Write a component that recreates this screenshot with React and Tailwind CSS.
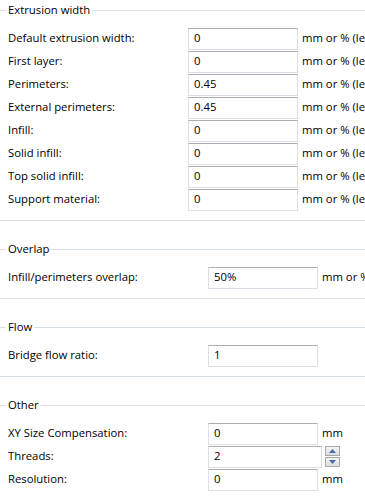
const font = { fontFamily: '"Open Sans", "Noto Sans", sans-serif' };

function Group({ title, children, last }) {
  return (
    <div
      className={`${last ? "" : "border-b border-[#d5dfe5] pb-[9px] mb-[18px]"}`}
    >
      <div className="flex items-center h-[20px]">
        <div className="w-[6px] h-px bg-[#d5dfe5] shrink-0" />
        <span className="px-[2px] leading-none">{title}</span>
        <div className="flex-1 h-px bg-[#d5dfe5]" />
      </div>
      <div className="mt-[7px] flex flex-col">{children}</div>
    </div>
  );
}

function Field({ label, value, unit, labelW, spin }) {
  return (
    <div className="flex items-center h-[23px] pl-[8px] whitespace-nowrap">
      <div className={`${labelW} shrink-0`}>{label}</div>
      <div
        className={`${spin ? "w-[114px]" : "w-[110px]"} shrink-0 h-[22px] border border-[#dbdfe6] border-t-[#abadb3] flex items-center pl-[5px] bg-white`}
      >
        {value}
      </div>
      {spin ? (
        <div className="ml-[3px] flex flex-col gap-[1px] shrink-0">
          <div className="w-[15px] h-[10px] border border-[#a8a8a8] bg-gradient-to-b from-[#f4f4f4] to-[#dcdcdc] flex items-center justify-center">
            <svg width="7" height="4" viewBox="0 0 7 4">
              <path d="M0 4 L3.5 0 L7 4 Z" fill="#4a6ab0" />
            </svg>
          </div>
          <div className="w-[15px] h-[10px] border border-[#a8a8a8] bg-gradient-to-b from-[#f4f4f4] to-[#dcdcdc] flex items-center justify-center">
            <svg width="7" height="4" viewBox="0 0 7 4">
              <path d="M0 0 L3.5 4 L7 0 Z" fill="#4a6ab0" />
            </svg>
          </div>
        </div>
      ) : (
        unit && <span className="ml-[4px] shrink-0">{unit}</span>
      )}
    </div>
  );
}

const extrusion = [
  ["Default extrusion width:", "0"],
  ["First layer:", "0"],
  ["Perimeters:", "0.45"],
  ["External perimeters:", "0.45"],
  ["Infill:", "0"],
  ["Solid infill:", "0"],
  ["Top solid infill:", "0"],
  ["Support material:", "0"],
];

const pct = "mm or % (leave 0 for default)";

export default function App() {
  return (
    <div
      className="w-[365px] h-[498px] bg-white text-black text-[11.3px] overflow-hidden"
      style={font}
    >
      <Group title="Extrusion width">
        {extrusion.map(([l, v]) => (
          <Field key={l} label={l} value={v} unit={pct} labelW="w-[180px]" />
        ))}
      </Group>
      <Group title="Overlap">
        <Field
          label="Infill/perimeters overlap:"
          value="50%"
          unit={pct}
          labelW="w-[200px]"
        />
      </Group>
      <Group title="Flow">
        <Field label="Bridge flow ratio:" value="1" labelW="w-[200px]" />
      </Group>
      <Group title="Other" last>
        <Field label="XY Size Compensation:" value="0" unit="mm" labelW="w-[200px]" />
        <Field label="Threads:" value="2" labelW="w-[200px]" spin />
        <Field label="Resolution:" value="0" unit="mm" labelW="w-[200px]" />
      </Group>
    </div>
  );
}
